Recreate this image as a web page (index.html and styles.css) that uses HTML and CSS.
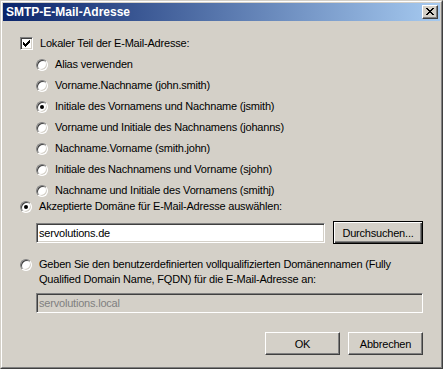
FILE: index.html
```html
<!DOCTYPE html>
<html lang="de">
<head>
<meta charset="utf-8">
<title>SMTP-E-Mail-Adresse</title>
<link rel="stylesheet" href="styles.css">
</head>
<body>
<div class="window">
  <div class="frame">
    <div class="titlebar">
      <span class="title">SMTP-E-Mail-Adresse</span>
      <span class="close"><svg width="8" height="7" viewBox="0 0 8 7" shape-rendering="crispEdges"><path d="M0 0h2v1h-2zM6 0h2v1h-2zM1 1h2v1h-2zM5 1h2v1h-2zM2 2h4v1h-4zM3 3h2v1h-2zM2 4h4v1h-4zM1 5h2v1h-2zM5 5h2v1h-2zM0 6h2v1h-2zM6 6h2v1h-2z" fill="#000"/></svg></span>
    </div>
    <div class="body">
      <div class="row top-row">
        <span class="checkbox"><svg width="7" height="7" viewBox="0 0 7 7" shape-rendering="crispEdges"><path d="M6 0h1v3h-1zM5 1h1v3h-1zM4 2h1v3h-1zM3 3h1v3h-1zM2 4h1v3h-1zM1 3h1v3h-1zM0 2h1v3h-1z" fill="#000"/></svg></span>
        <span class="label">Lokaler Teil der E-Mail-Adresse:</span>
      </div>
      <div class="row sub"><span class="radio"></span><span class="label">Alias verwenden</span></div>
      <div class="row sub"><span class="radio"></span><span class="label">Vorname.Nachname (john.smith)</span></div>
      <div class="row sub"><span class="radio on"></span><span class="label">Initiale des Vornamens und Nachname (jsmith)</span></div>
      <div class="row sub"><span class="radio"></span><span class="label">Vorname und Initiale des Nachnamens (johanns)</span></div>
      <div class="row sub"><span class="radio"></span><span class="label">Nachname.Vorname (smith.john)</span></div>
      <div class="row sub"><span class="radio"></span><span class="label">Initiale des Nachnamens und Vorname (sjohn)</span></div>
      <div class="row sub"><span class="radio"></span><span class="label">Nachname und Initiale des Vornamens (smithj)</span></div>
      <div class="row short"><span class="radio on"></span><span class="label">Akzeptierte Domäne für E-Mail-Adresse auswählen:</span></div>
      <div class="field-row">
        <div class="textbox">servolutions.de</div>
        <div class="button default"><span>Durchsuchen...</span></div>
      </div>
      <div class="multi-row">
        <span class="radio"></span>
        <span class="label multi">Geben Sie den benutzerdefinierten vollqualifizierten Domänennamen (Fully Qualified Domain Name, FQDN) für die E-Mail-Adresse an:</span>
      </div>
      <div class="textbox disabled wide">servolutions.local</div>
      <div class="buttons">
        <div class="button"><span>OK</span></div>
        <div class="button"><span>Abbrechen</span></div>
      </div>
    </div>
  </div>
</div>
</body>
</html>
```
FILE: styles.css
```css
html, body {
  margin: 0;
  padding: 0;
  background: #d4d0c8;
}
body {
  font-family: "Liberation Sans", Arial, sans-serif;
  font-size: 11px;
  color: #000;
}
.window {
  width: 443px;
  height: 369px;
  box-sizing: border-box;
  border: 1px solid;
  border-color: #d4d0c8 #404040 #404040 #d4d0c8;
  background: #d4d0c8;
}
.frame {
  height: 100%;
  box-sizing: border-box;
  border: 1px solid;
  border-color: #fff #808080 #808080 #fff;
  padding: 1px;
}
.titlebar {
  height: 18px;
  background: linear-gradient(to right, #0a246a, #a6caf0);
  display: flex;
  align-items: center;
  justify-content: space-between;
  padding: 0 2px 0 3px;
}
.title {
  color: #fff;
  font-weight: bold;
  font-size: 12px;
}
.close {
  width: 16px;
  height: 14px;
  box-sizing: border-box;
  background: #d4d0c8;
  border: 1px solid;
  border-color: #fff #404040 #404040 #fff;
  box-shadow: inset -1px -1px #808080;
  display: flex;
  align-items: center;
  justify-content: center;
  padding: 0 1px 1px 0;
}
.close svg { display: block; }
.body {
  padding: 12px 17px 0 17px;
  display: flex;
  flex-direction: column;
}
.row {
  height: 21px;
  display: flex;
  align-items: center;
}
.row.sub { padding-left: 16px; }
.row.short { height: 13px; margin-top: -1px; }
.label {
  white-space: nowrap;
  line-height: 13px;
  letter-spacing: -0.2px;
}
.checkbox {
  width: 13px;
  height: 13px;
  box-sizing: border-box;
  background: #fff;
  border: 1px solid;
  border-color: #808080 #fff #fff #808080;
  box-shadow: inset 1px 1px #404040, inset -1px -1px #d4d0c8;
  display: flex;
  align-items: center;
  justify-content: center;
  margin-right: 7px;
}
.checkbox svg { display: block; }
.radio {
  width: 12px;
  height: 12px;
  box-sizing: border-box;
  border-radius: 50%;
  background: #fff;
  border: 1px solid;
  border-color: #808080 #fff #fff #808080;
  box-shadow: inset 1px 1px #404040, inset -1px -1px #d4d0c8;
  margin-right: 7px;
  flex: none;
  display: flex;
  align-items: center;
  justify-content: center;
}
.radio.on::after {
  content: "";
  width: 4px;
  height: 4px;
  border-radius: 50%;
  background: #000;
}
.field-row {
  margin-top: 8px;
  height: 23px;
  padding-left: 16px;
  display: flex;
  align-items: center;
  gap: 8px;
}
.textbox {
  height: 20px;
  box-sizing: border-box;
  background: #fff;
  border: 1px solid;
  border-color: #808080 #fff #fff #808080;
  box-shadow: inset 1px 1px #404040, inset -1px -1px #d4d0c8;
  padding: 0 2px;
  line-height: 18px;
  flex: 1;
  letter-spacing: -0.2px;
}
.textbox.disabled {
  background: #d4d0c8;
  color: #808080;
}
.textbox.wide {
  margin: 6px 0 0 16px;
  flex: none;
}
.button {
  width: 90px;
  height: 23px;
  box-sizing: border-box;
  border: 1px solid;
  border-color: #fff #404040 #404040 #fff;
  box-shadow: inset -1px -1px #808080;
  background: #d4d0c8;
  display: flex;
  align-items: center;
  justify-content: center;
  letter-spacing: -0.2px;
}
.button.default {
  border: 1px solid #000;
  box-shadow: inset 1px 1px #fff, inset -1px -1px #404040, inset -2px -2px #808080;
}
.multi-row {
  margin-top: 13px;
  display: flex;
  align-items: flex-start;
}
.multi-row .radio { margin-top: 2px; }
.label.multi {
  white-space: normal;
  line-height: 15px;
  width: 385px;
}
.buttons {
  margin-top: 19px;
  display: flex;
  justify-content: flex-end;
  gap: 8px;
}
.buttons .button { width: 75px; }
```
